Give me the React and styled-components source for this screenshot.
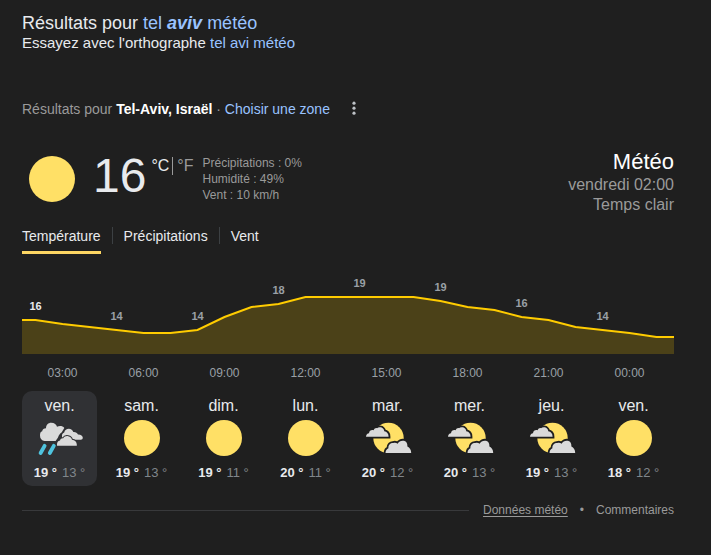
// src/App.jsx

import React, { useState } from 'react';
import styled, { createGlobalStyle } from 'styled-components';

const GlobalStyle = createGlobalStyle`
  * {
    box-sizing: border-box;
  }
  body {
    margin: 0;
    background: #1f1f1f;
    color: #e8eaed;
    font-family: 'Liberation Sans', Arial, sans-serif;
    font-size: 14px;
  }
  h1, h2, p {
    margin: 0;
    font-weight: 400;
  }
  a {
    color: #99c3ff;
    text-decoration: none;
  }
  button {
    margin: 0;
    padding: 0;
    border: 0;
    background: none;
    color: inherit;
    font: inherit;
    cursor: pointer;
  }
`;

const Page = styled.main`
  padding: 12px 37px 36px 22px;
`;

const Title = styled.h1`
  font-size: 18px;
  line-height: 22px;
  b {
    font-style: italic;
  }
`;

const Spelling = styled.p`
  font-size: 15px;
  line-height: 18px;
`;

const Location = styled.div`
  display: flex;
  align-items: center;
  margin-top: 47px;
  line-height: 20px;
  color: #9a9a9a;
  strong {
    color: #fff;
  }
`;

const MoreButton = styled.button`
  display: flex;
  margin-left: 15px;
  color: #bdc1c6;
`;

const Header = styled.header`
  display: flex;
  justify-content: space-between;
  margin-top: 29px;
`;

const Current = styled.div`
  display: flex;
  align-items: flex-start;
  padding: 4px 0 0 7px;
  > svg {
    margin-top: 4px;
  }
`;

const Degrees = styled.span`
  margin-left: 18px;
  font-size: 48px;
  line-height: 48px;
`;

const Units = styled.div`
  display: flex;
  align-items: center;
  margin: 5px 0 0 5px;
  font-size: 16px;
  line-height: 18px;
`;

const Unit = styled.button`
  color: ${p => p.$active ? '#e8eaed' : '#9a9a9a'};
  & + & {
    margin-left: 3px;
    padding-left: 4px;
    border-left: 1px solid #9a9a9a;
  }
`;

const Details = styled.div`
  margin: 3px 0 0 9px;
  font-size: 12px;
  line-height: 16px;
  color: #9a9a9a;
`;

const Summary = styled.div`
  text-align: right;
  font-size: 16px;
  line-height: 20px;
  color: #9a9a9a;
  h2 {
    font-size: 22px;
    line-height: 27px;
    color: #fff;
  }
`;

const Tabs = styled.div`
  display: flex;
  align-items: flex-start;
  margin-top: 11px;
`;

const Tab = styled.button`
  padding-bottom: 5px;
  border-bottom: 3px solid ${p => p.$active ? '#fdd663' : 'transparent'};
  line-height: 20px;
  color: #e8eaed;
`;

const TabDivider = styled.span`
  width: 1px;
  height: 17px;
  margin: 1px 11px 0;
  background: #3c4043;
`;

const ChartSvg = styled.svg`
  display: block;
  width: 100%;
  height: auto;
  margin-top: 16px;
  text {
    font-size: 11px;
    font-weight: 700;
    text-anchor: middle;
    fill: #9aa0a6;
  }
  text:first-of-type {
    fill: #e8eaed;
  }
`;

const Hours = styled.div`
  display: grid;
  grid-template-columns: repeat(8, 1fr);
  margin-top: 11px;
  padding-right: 4px;
  font-size: 12px;
  line-height: 16px;
  text-align: center;
  color: #9aa0a6;
`;

const Days = styled.div`
  display: grid;
  grid-template-columns: repeat(8, 1fr);
  gap: 7px;
  margin-top: 10px;
  padding-right: 3px;
`;

const Day = styled.button`
  display: flex;
  flex-direction: column;
  align-items: center;
  padding: 6px 0 5px;
  border-radius: 10px;
  background: ${p => p.$active ? '#303134' : 'transparent'};
`;

const DayName = styled.span`
  font-size: 16px;
  line-height: 17px;
`;

const Temps = styled.span`
  display: flex;
  gap: 5px;
  margin-top: 3px;
  font-size: 13px;
  line-height: 16px;
  color: #80868b;
  white-space: nowrap;
  b {
    color: #e8eaed;
  }
`;

const Footer = styled.footer`
  display: flex;
  align-items: center;
  margin-top: 16px;
  font-size: 12px;
  line-height: 16px;
  color: #9a9a9a;
`;

const Rule = styled.span`
  flex: 1;
  height: 1px;
  margin-right: 14px;
  background: #38393b;
`;

const FooterLink = styled.a`
  color: #9a9a9a;
  text-decoration: ${p => p.$underlined ? 'underline' : 'none'};
  text-underline-offset: 2px;
`;

const Bullet = styled.span`
  margin: 0 12px;
`;

function Sun({ size }) {
  return (
    <svg width={size} height={size} viewBox="0 0 46 46" aria-hidden="true">
      <circle cx="23" cy="23" r="23" fill="#ffe066" />
    </svg>
  );
}

function SunnyIcon() {
  return (
    <svg width="48" height="48" viewBox="0 0 48 48" aria-hidden="true">
      <circle cx="24" cy="24" r="18" fill="#ffe066" />
    </svg>
  );
}

function PartlyCloudyIcon() {
  return (
    <svg width="48" height="48" viewBox="0 0 48 48" aria-hidden="true">
      <circle cx="24.5" cy="24" r="15.2" fill="#ffe066" />
      <g fill="#dadada" stroke="#1f1f1f" strokeWidth="3.6" paintOrder="stroke">
        <path d="M2 22.7C2.2 20.6 3.3 19.6 5 19.3C5.3 16.8 7.3 15.6 9.6 16.3C10.4 14.6 11.6 13.8 13 14.2C14.4 13 17.6 12.9 19 14.6C19.8 15.5 20.2 16.2 20.3 17.2C22.8 17.5 24.6 19.4 24.6 22.7Z" />
        <path d="M21.5 39C21.6 36.4 22.7 34.8 24.4 34.2C24.2 30.8 26.6 28.6 29.2 29C31 28.3 32.4 28.7 33.6 29.8C34.8 27.2 37.6 26.2 40 26.8C42.6 27.5 43.5 29.7 43.4 32.6C45.7 33.8 47.2 36.1 47.2 39Z" />
      </g>
      <path d="M20 41H48V44H20Z" fill="#1f1f1f" />
    </svg>
  );
}

function RainIcon() {
  return (
    <svg width="48" height="48" viewBox="0 0 48 48" aria-hidden="true">
      <g fill="#dadada" stroke="#303134" strokeWidth="2" paintOrder="stroke">
        <path d="M26 25.7V21C26.2 19.6 27 18.8 28.2 18.4C28.8 16 30.6 14.7 32.8 14.7C35 14.7 36.8 16 37.3 18C39.5 17.8 41.2 18.7 42 20.6C44.8 20.5 46.8 22 46.8 23.8C46.8 25 46 25.7 44.8 25.7Z" />
        <path d="M8.6 27C5.8 26.8 4 24.8 4 21.6C4 19 4.6 17.6 6.2 17.2C6.4 15.4 8 14.3 10 14.2C10 10.8 12.2 8.7 15.2 8.7C18.4 8.7 20.6 10.4 21 12.8C23.6 11.6 26.8 12 28.3 13.9L25.6 18.4C24 19.2 22.8 21 22 23.4L19.6 27Z" />
        <path d="M21 31.8C20.7 28.7 21.8 27 24 26.6C24.4 24.8 25.6 24 27.2 24.2C28.2 22.4 30.2 21.8 32.2 22.2C34.4 22.6 35.6 24 36 25.8C38.8 26 40.8 28 40.8 30.4V31.8Z" />
      </g>
      <path d="M8.6 31.8L4.6 39M17.8 31.8L13.8 39" stroke="#4fc3de" strokeWidth="3.8" strokeLinecap="round" />
    </svg>
  );
}

const ICONS = {
  rain: RainIcon,
  sun: SunnyIcon,
  partly: PartlyCloudyIcon,
};

const TABS = ['Température', 'Précipitations', 'Vent'];

const HOURS = ['03:00', '06:00', '09:00', '12:00', '15:00', '18:00', '21:00', '00:00'];

// one line height per hour, from 02:00
const CURVE = [
  50, 54, 57, 60, 63, 63, 60, 47, 37, 34, 27, 27,
  27, 27, 27, 31, 37, 40, 47, 50, 57, 60, 63, 67,
];

// every third hour gets its temperature written above the line
const CHART_LABELS = [16, 14, 14, 18, 19, 19, 16, 14];

const DAYS = [
  { name: 'ven.', icon: 'rain', max: 19, min: 13 },
  { name: 'sam.', icon: 'sun', max: 19, min: 13 },
  { name: 'dim.', icon: 'sun', max: 19, min: 11 },
  { name: 'lun.', icon: 'sun', max: 20, min: 11 },
  { name: 'mar.', icon: 'partly', max: 20, min: 12 },
  { name: 'mer.', icon: 'partly', max: 20, min: 13 },
  { name: 'jeu.', icon: 'partly', max: 19, min: 13 },
  { name: 'ven.', icon: 'sun', max: 18, min: 12 },
];

const pointX = i => 13.5 + i * 27;

function Chart() {
  const points = CURVE.map((y, i) => `${pointX(i)},${y}`).join(' ');
  const line = `0,${CURVE[0]} ${points} 652,${CURVE[CURVE.length - 1]}`;

  return (
    <ChartSvg viewBox="0 0 652 84" role="img" aria-label="Température">
      <polygon points={`0,84 ${line} 652,84`} fill="#ffcc00" fillOpacity="0.2" />
      <polyline points={line} fill="none" stroke="#ffcc00" strokeWidth="2" />
      {CHART_LABELS.map((t, i) => (
        <text key={i} x={pointX(i * 3)} y={CURVE[i * 3] - 10}>{t}</text>
      ))}
    </ChartSvg>
  );
}

function App() {
  const [tab, setTab] = useState(0);
  const [day, setDay] = useState(0);
  const [unit, setUnit] = useState('C');

  return (
    <>
      <GlobalStyle />
      <Page>
        <Title>Résultats pour <a href="#">tel <b>aviv</b> météo</a></Title>
        <Spelling>Essayez avec l'orthographe <a href="#">tel avi météo</a></Spelling>

        <Location>
          <span>
            Résultats pour <strong>Tel-Aviv, Israël</strong> · <a href="#">Choisir une zone</a>
          </span>
          <MoreButton aria-label="Plus">
            <svg width="18" height="18" viewBox="0 0 18 18" fill="currentColor" aria-hidden="true">
              <circle cx="9" cy="3.2" r="1.6" />
              <circle cx="9" cy="8.2" r="1.6" />
              <circle cx="9" cy="13.2" r="1.6" />
            </svg>
          </MoreButton>
        </Location>

        <Header>
          <Current>
            <Sun size={46} />
            <Degrees>16</Degrees>
            <Units>
              <Unit $active={unit === 'C'} onClick={() => setUnit('C')}>°C</Unit>
              <Unit $active={unit === 'F'} onClick={() => setUnit('F')}>°F</Unit>
            </Units>
            <Details>
              <p>Précipitations : 0%</p>
              <p>Humidité : 49%</p>
              <p>Vent : 10 km/h</p>
            </Details>
          </Current>
          <Summary>
            <h2>Météo</h2>
            <p>vendredi 02:00</p>
            <p>Temps clair</p>
          </Summary>
        </Header>

        <Tabs>
          {TABS.map((name, i) => (
            <React.Fragment key={name}>
              {i > 0 && <TabDivider />}
              <Tab $active={tab === i} onClick={() => setTab(i)}>{name}</Tab>
            </React.Fragment>
          ))}
        </Tabs>

        <Chart />

        <Hours>
          {HOURS.map(h => <span key={h}>{h}</span>)}
        </Hours>

        <Days>
          {DAYS.map((d, i) => {
            const Icon = ICONS[d.icon];
            return (
              <Day key={i} $active={day === i} onClick={() => setDay(i)}>
                <DayName>{d.name}</DayName>
                <Icon />
                <Temps><b>{d.max} °</b><span>{d.min} °</span></Temps>
              </Day>
            );
          })}
        </Days>

        <Footer>
          <Rule />
          <FooterLink href="#" $underlined>Données météo</FooterLink>
          <Bullet>•</Bullet>
          <FooterLink href="#">Commentaires</FooterLink>
        </Footer>
      </Page>
    </>
  );
}

export default App;
